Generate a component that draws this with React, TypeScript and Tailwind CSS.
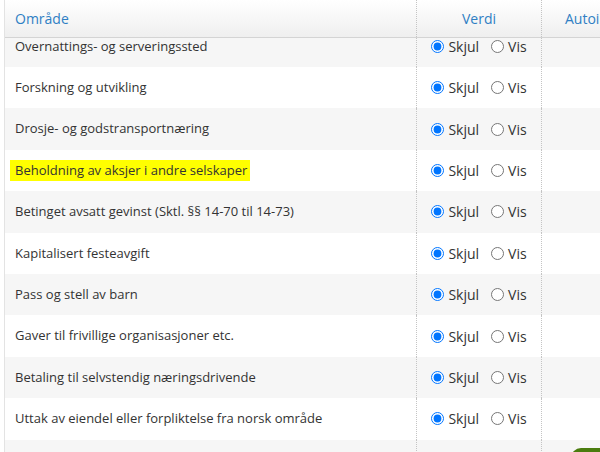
import React from 'react';

type Row = { label: string; marked?: boolean };

const rows: Row[] = [
  { label: 'Overnattings- og serveringssted' },
  { label: 'Forskning og utvikling' },
  { label: 'Drosje- og godstransportnæring' },
  { label: 'Beholdning av aksjer i andre selskaper', marked: true },
  { label: 'Betinget avsatt gevinst (Sktl. §§ 14-70 til 14-73)' },
  { label: 'Kapitalisert festeavgift' },
  { label: 'Pass og stell av barn' },
  { label: 'Gaver til frivillige organisasjoner etc.' },
  { label: 'Betaling til selvstendig næringsdrivende' },
  { label: 'Uttak av eiendel eller forpliktelse fra norsk område' },
  { label: '' },
];

function Choice({ name, isLast }: { name: string; isLast: boolean }) {
  if (isLast) return null;
  return (
    <div className="flex items-center justify-center text-[14px] text-[#333]">
      <label className="flex items-center">
        <input type="radio" name={name} defaultChecked className="m-0 h-[13px] w-[13px]" />
        <span className="ml-[4px]">Skjul</span>
      </label>
      <label className="ml-[12px] flex items-center">
        <input type="radio" name={name} className="m-0 h-[13px] w-[13px]" />
        <span className="ml-[4px]">Vis</span>
      </label>
    </div>
  );
}

export default function App() {
  return (
    <div
      className="relative h-[452px] w-[600px] overflow-hidden bg-white pl-[4px]"
      style={{ fontFamily: '"Open Sans", "Noto Sans", sans-serif' }}
    >
      <div className="h-full border-l border-[#e3e3e3]">
        {/* Header */}
        <div className="grid h-[38px] grid-cols-[411px_126px_1fr] border-b border-[#d4d4d4] bg-gradient-to-b from-white to-[#efefef] text-[14px] text-[#2f7fc4]">
          <div className="flex items-center pl-[10px]">Område</div>
          <div className="flex items-center justify-center border-x border-dotted border-[#c4c4c4]">Verdi</div>
          <div className="flex items-center whitespace-nowrap pl-[23px]">Autoinnstilling</div>
        </div>

        {/* Body, scrolled a little */}
        <div className="h-[414px] overflow-hidden">
          <div className="-mt-[12.4px]">
            {rows.map((row, i) => (
              <div
                key={i}
                className={`grid h-[41.4px] grid-cols-[411px_126px_1fr] ${i % 2 === 0 ? 'bg-[#f6f6f6]' : 'bg-white'}`}
              >
                <div className="flex items-center pl-[10px] text-[13px] text-[#333]">
                  {row.marked ? (
                    <span className="-ml-[5px] bg-[#ffff00] py-[1px] pl-[5px] pr-[3px]">{row.label}</span>
                  ) : (
                    row.label
                  )}
                </div>
                <div className="flex items-center justify-center border-x border-dotted border-[#c4c4c4]">
                  <Choice name={`r${i}`} isLast={row.label === ''} />
                </div>
                <div />
              </div>
            ))}
          </div>
        </div>
      </div>

      {/* Floating action button peeking in at the corner */}
      <div className="absolute left-[571px] top-[448px] h-[30px] w-[60px] rounded-tl-[10px] bg-[#4a7c0e]" />
    </div>
  );
}
